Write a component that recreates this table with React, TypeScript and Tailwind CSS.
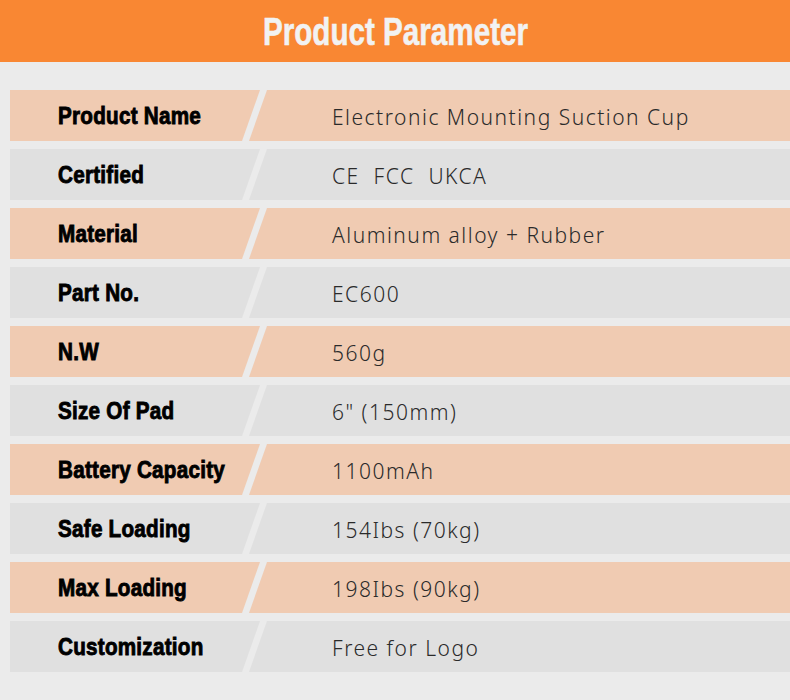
const rows = [
  { label: "Product Name", value: "Electronic Mounting Suction Cup" },
  { label: "Certified", value: "CE\u00a0\u00a0FCC\u00a0\u00a0UKCA" },
  { label: "Material", value: "Aluminum alloy + Rubber" },
  { label: "Part No.", value: "EC600" },
  { label: "N.W", value: "560g" },
  { label: "Size Of Pad", value: '6" (150mm)' },
  { label: "Battery Capacity", value: "1100mAh" },
  { label: "Safe Loading", value: "154Ibs (70kg)" },
  { label: "Max Loading", value: "198Ibs (90kg)" },
  { label: "Customization", value: "Free for Logo" },
]

export default function App() {
  return (
    <div className="w-[790px] h-[700px] bg-[#ebebeb] overflow-hidden">
      {/* Header */}
      <div className="h-[62px] bg-[#f98733] flex items-center justify-center">
        <h1 className="inline-block font-['Liberation_Sans',sans-serif] font-bold text-[39px] leading-none text-[#f2f2f2] [transform:scaleX(0.76)] [-webkit-text-stroke:0.6px_#f2f2f2]">
          Product Parameter
        </h1>
      </div>

      {/* Parameter rows */}
      <div className="pt-[28px] flex flex-col gap-2">
        {rows.map((row, i) => {
          const bg = i % 2 === 0 ? "bg-[#f0cbb2]" : "bg-[#e0e0e0]"
          return (
            <div key={row.label} className="flex h-[51px] pl-[10px]">
              <div
                className={`${bg} w-[250px] shrink-0 flex items-center pl-[48px] [clip-path:polygon(0_0,100%_0,calc(100%-18px)_100%,0_100%)]`}
              >
                <span className="inline-block origin-left whitespace-nowrap font-['Liberation_Sans',sans-serif] font-bold text-[24px] leading-none tracking-[0.3px] text-black [transform:scaleX(0.86)] [-webkit-text-stroke:0.9px_#000]">
                  {row.label}
                </span>
              </div>
              <div
                className={`${bg} flex-1 -ml-[11px] flex items-center pl-[83px] pt-[4px] [clip-path:polygon(18px_0,100%_0,100%_100%,0_100%)]`}
              >
                <span className="whitespace-nowrap font-['Noto_Sans',sans-serif] font-light text-[21px] tracking-[1.5px] leading-none text-[#2a2a2a]">
                  {row.value}
                </span>
              </div>
            </div>
          )
        })}
      </div>
    </div>
  )
}
